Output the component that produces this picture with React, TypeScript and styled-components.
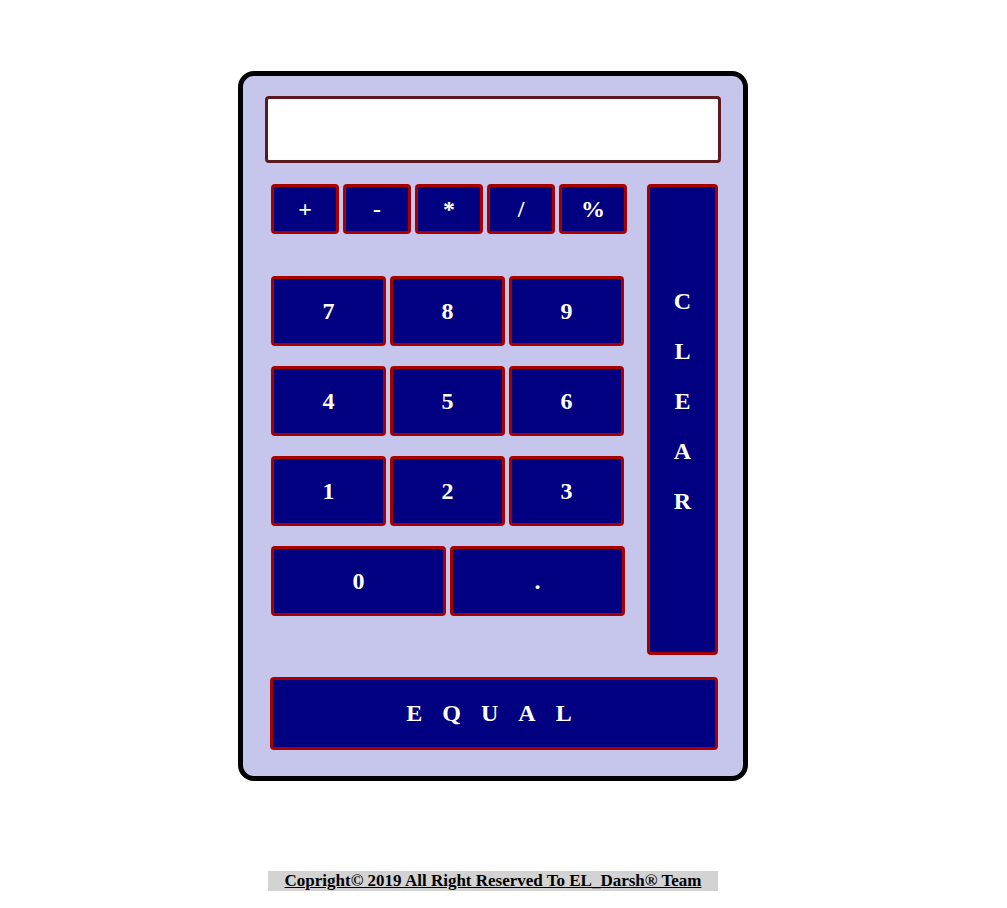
import React from "react";
import styled, { createGlobalStyle } from "styled-components";

const GlobalStyle = createGlobalStyle`
  html, body {
    margin: 0;
    padding: 0;
    background: #fff;
  }
  body {
    font-family: "Liberation Serif", "Times New Roman", serif;
  }
`;

const Page = styled.div`
  width: 1007px;
  padding-top: 71px;
  display: flex;
  flex-direction: column;
`;

const Calculator = styled.div`
  margin-left: 238px;
  width: 510px;
  height: 710px;
  box-sizing: border-box;
  border: 5px solid #000;
  border-radius: 16px;
  background: #c6c5ec;
  padding: 20px 22px 0 22px;
  display: flex;
  flex-direction: column;
`;

const Screen = styled.div`
  width: 456px;
  height: 67px;
  box-sizing: border-box;
  border: 3px solid #5b1a20;
  border-radius: 4px;
  background: #fff;
`;

const Keypad = styled.div`
  margin-top: 21px;
  margin-left: 6px;
  display: flex;
  gap: 20px;
`;

const LeftPad = styled.div`
  display: flex;
  flex-direction: column;
`;

const Row = styled.div<{ $gap?: number }>`
  display: flex;
  gap: 4px;
  margin-bottom: ${p => (p.$gap ?? 20)}px;
`;

const Key = styled.button<{ $w: number; $h: number }>`
  width: ${p => p.$w}px;
  height: ${p => p.$h}px;
  box-sizing: border-box;
  border: 3px solid #a80000;
  border-radius: 4px;
  background: #000080;
  color: #fff;
  font-family: "Liberation Serif", "Times New Roman", serif;
  font-weight: bold;
  font-size: 24px;
  padding: 0;
  display: flex;
  align-items: center;
  justify-content: center;
  cursor: pointer;
`;

const ClearKey = styled(Key)`
  flex-direction: column;
  padding-bottom: 37px;
  line-height: 50px;
`;

const EqualKey = styled(Key)`
  margin-top: 22px;
  margin-left: 5px;
  letter-spacing: 20px;
  padding-left: 10px;
`;

const Footer = styled.div`
  margin-top: 90px;
  margin-left: 268px;
  width: 450px;
  height: 20px;
  background: #d3d3d3;
  font-family: "Liberation Serif", "Times New Roman", serif;
  font-weight: bold;
  font-size: 17px;
  line-height: 20px;
  text-decoration: underline;
  color: #000;
  text-align: center;
`;

const operators = ["+", "-", "*", "/", "%"];
const digits = [
  ["7", "8", "9"],
  ["4", "5", "6"],
  ["1", "2", "3"],
];

export default function App() {
  return (
    <>
      <GlobalStyle />
      <Page>
        <Calculator>
          <Screen />
          <Keypad>
            <LeftPad>
              <Row $gap={42}>
                {operators.map(op => (
                  <Key key={op} $w={68} $h={50}>
                    {op}
                  </Key>
                ))}
              </Row>
              {digits.map(row => (
                <Row key={row[0]}>
                  {row.map(d => (
                    <Key key={d} $w={115} $h={70}>
                      {d}
                    </Key>
                  ))}
                </Row>
              ))}
              <Row $gap={0}>
                <Key $w={175} $h={70}>0</Key>
                <Key $w={175} $h={70}>.</Key>
              </Row>
            </LeftPad>
            <ClearKey $w={71} $h={471}>
              {"CLEAR".split("").map(c => (
                <span key={c}>{c}</span>
              ))}
            </ClearKey>
          </Keypad>
          <EqualKey $w={448} $h={73}>EQUAL</EqualKey>
        </Calculator>
        <Footer>Copright© 2019 All Right Reserved To EL_Darsh® Team</Footer>
      </Page>
    </>
  );
}
